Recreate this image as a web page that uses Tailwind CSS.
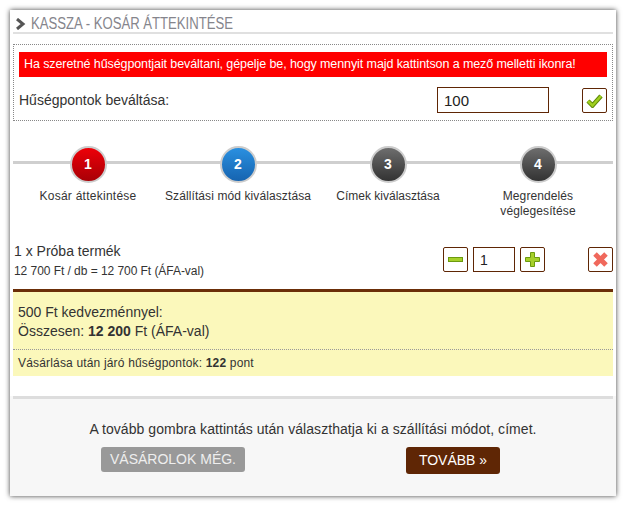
<!DOCTYPE html>
<html lang="hu">
<head>
  <meta charset="UTF-8" />
  <title>Kassza</title>
  <script src="https://cdn.jsdelivr.net/npm/@tailwindcss/browser@4"></script>
</head>
<body class="bg-white font-['Liberation_Sans',Arial,sans-serif] text-[#333]">
  <div class="p-[10px]">
    <div class="w-[606px] h-[486px] bg-white shadow-[0_0_5px_rgba(0,0,0,0.75)] flex flex-col">

      <!-- Title -->
      <div class="mx-[3px] h-[24px] border-b-2 border-[#e0e0e0] flex items-center gap-[5px] pl-[2px] pt-[5px]">
        <svg width="11" height="12" viewBox="0 0 11 12"><path d="M2 1 L8 6 L2 11" fill="none" stroke="#555" stroke-width="3"/></svg>
        <span class="text-[16px] leading-none text-[#85858c] whitespace-nowrap origin-left scale-x-[0.82] mt-[1px]">KASSZA - KOSÁR ÁTTEKINTÉSE</span>
      </div>

      <!-- Points -->
      <div class="mx-[3px] mt-[10px] h-[77px] border border-dotted border-[#888] px-[5px] pt-[7px]">
        <div class="h-[25px] bg-[#ff0000] text-white text-[12.5px] pl-[5px] flex items-center whitespace-nowrap tracking-[-0.09px]">Ha szeretné hűségpontjait beváltani, gépelje be, hogy mennyit majd kattintson a mező melletti ikonra!</div>
        <div class="flex items-center mt-[10px]">
          <span class="text-[14px] w-[418px]">Hűségpontok beváltása:</span>
          <input value="100" class="w-[112px] h-[26px] border border-[#5f2605] px-[6px] text-[15px] text-[#222] outline-none" />
          <button class="ml-[33px] w-[25px] h-[25px] border border-[#5f2605] rounded-[2px] flex items-center justify-center">
            <svg width="17" height="15" viewBox="0 0 17 15"><path d="M2 8 L6.5 12.5 L15 3" fill="none" stroke="#5f8a08" stroke-width="4.5"/><path d="M2 8 L6.5 12.5 L15 3" fill="none" stroke="#9fcf1f" stroke-width="2.5"/></svg>
          </button>
        </div>
      </div>

      <!-- Steps -->
      <div class="relative mx-[3px] mt-[23px] h-[75px] grid grid-cols-4">
        <div class="absolute left-0 right-0 top-[17px] h-[3px] bg-[#cfcfcf]"></div>
        <div class="relative flex flex-col items-center pt-[2px]">
          <div class="w-[37px] h-[37px] rounded-full border-[2px] border-[#ccc] bg-linear-to-b from-[#ee0008] to-[#a80006] text-white font-bold text-[14px] flex items-center justify-center">1</div>
          <span class="text-[12px] leading-[15px] mt-[6px] text-center tracking-[0.25px]">Kosár áttekintése</span>
        </div>
        <div class="relative flex flex-col items-center pt-[2px]">
          <div class="w-[37px] h-[37px] rounded-full border-[2px] border-[#ccc] bg-linear-to-b from-[#2a90e0] to-[#1664b0] text-white font-bold text-[14px] flex items-center justify-center">2</div>
          <span class="text-[12px] leading-[15px] mt-[6px] text-center tracking-[0.1px]">Szállítási mód kiválasztása</span>
        </div>
        <div class="relative flex flex-col items-center pt-[2px]">
          <div class="w-[37px] h-[37px] rounded-full border-[2px] border-[#ccc] bg-linear-to-b from-[#6e6e6e] to-[#333] text-white font-bold text-[14px] flex items-center justify-center">3</div>
          <span class="text-[12px] leading-[15px] mt-[6px] text-center">Címek kiválasztása</span>
        </div>
        <div class="relative flex flex-col items-center pt-[2px]">
          <div class="w-[37px] h-[37px] rounded-full border-[2px] border-[#ccc] bg-linear-to-b from-[#6e6e6e] to-[#333] text-white font-bold text-[14px] flex items-center justify-center">4</div>
          <span class="text-[12px] leading-[15px] mt-[6px] text-center tracking-[0.1px]">Megrendelés<br />véglegesítése</span>
        </div>
      </div>

      <!-- Product row -->
      <div class="mx-[3px] mt-[27px] h-[41px] flex">
        <div class="w-[430px] -mt-[3px] pl-[1px]">
          <div class="text-[14px] leading-[17px]">1 x Próba termék</div>
          <div class="text-[12px] leading-[15px] mt-[4px] tracking-[-0.05px]">12 700 Ft / db = 12 700 Ft (ÁFA-val)</div>
        </div>
        <div class="flex gap-[5px] items-start mt-[1px]">
          <button class="w-[25px] h-[25px] border border-[#5f2605] rounded-[2px] flex items-center justify-center">
            <svg width="15" height="5" viewBox="0 0 15 5"><rect x="0.5" y="0.5" width="14" height="4" fill="#a6d02a" stroke="#6c9a0e"/></svg>
          </button>
          <input value="1" class="w-[42px] h-[25px] border border-[#5f2605] px-[6px] text-[14px] text-[#222] outline-none" />
          <button class="w-[25px] h-[25px] border border-[#5f2605] rounded-[2px] flex items-center justify-center">
            <svg width="15" height="15" viewBox="0 0 15 15"><path d="M5.5 0.5 H9.5 V5.5 H14.5 V9.5 H9.5 V14.5 H5.5 V9.5 H0.5 V5.5 H5.5 Z" fill="#a6d02a" stroke="#6c9a0e"/></svg>
          </button>
          <button class="ml-[38px] w-[25px] h-[25px] border border-[#5f2605] rounded-[2px] flex items-center justify-center">
            <svg width="17" height="17" viewBox="0 0 17 17"><path d="M3 3 L14 14 M14 3 L3 14" stroke="#f0685c" stroke-width="5"/></svg>
          </button>
        </div>
      </div>

      <!-- Summary -->
      <div class="mx-[3px] mt-[2px] border-t-[3px] border-[#6b2e08] bg-[#fbf8bb] h-[87px]">
        <div class="h-[58px] px-[5px] pt-[11px] border-b border-dotted border-[#999] text-[14px] leading-[19px]">
          <div>500 Ft kedvezménnyel:</div>
          <div>Összesen: <b>12 200</b> Ft (ÁFA-val)</div>
        </div>
        <div class="px-[5px] pt-[6px] text-[12px] leading-[15px] tracking-[0.17px]">Vásárlása után járó hűségpontok: <b>122</b> pont</div>
      </div>

      <!-- Footer -->
      <div class="mt-[20px] flex-1 px-[3px]">
        <div class="h-full -mx-[3px] bg-[#f7f7f7]">
          <div class="mx-[3px] h-[3px] bg-[#ddd]"></div>
          <div class="text-center text-[14px] leading-[17px] pt-[22px] tracking-[0.06px]">A tovább gombra kattintás után választhatja ki a szállítási módot, címet.</div>
          <div class="relative flex mt-[9px] items-start">
            <a class="ml-[91px] w-[144px] h-[25px] rounded-[3px] bg-[#999] text-[#eee] text-[14px] flex items-center justify-center">VÁSÁROLOK MÉG.</a>
            <a class="ml-[161px] w-[94px] h-[27px] rounded-[3px] bg-[#5f2605] text-white text-[14px] flex items-center justify-center">TOVÁBB »</a>
          </div>
        </div>
      </div>

    </div>
  </div>
</body>
</html>
